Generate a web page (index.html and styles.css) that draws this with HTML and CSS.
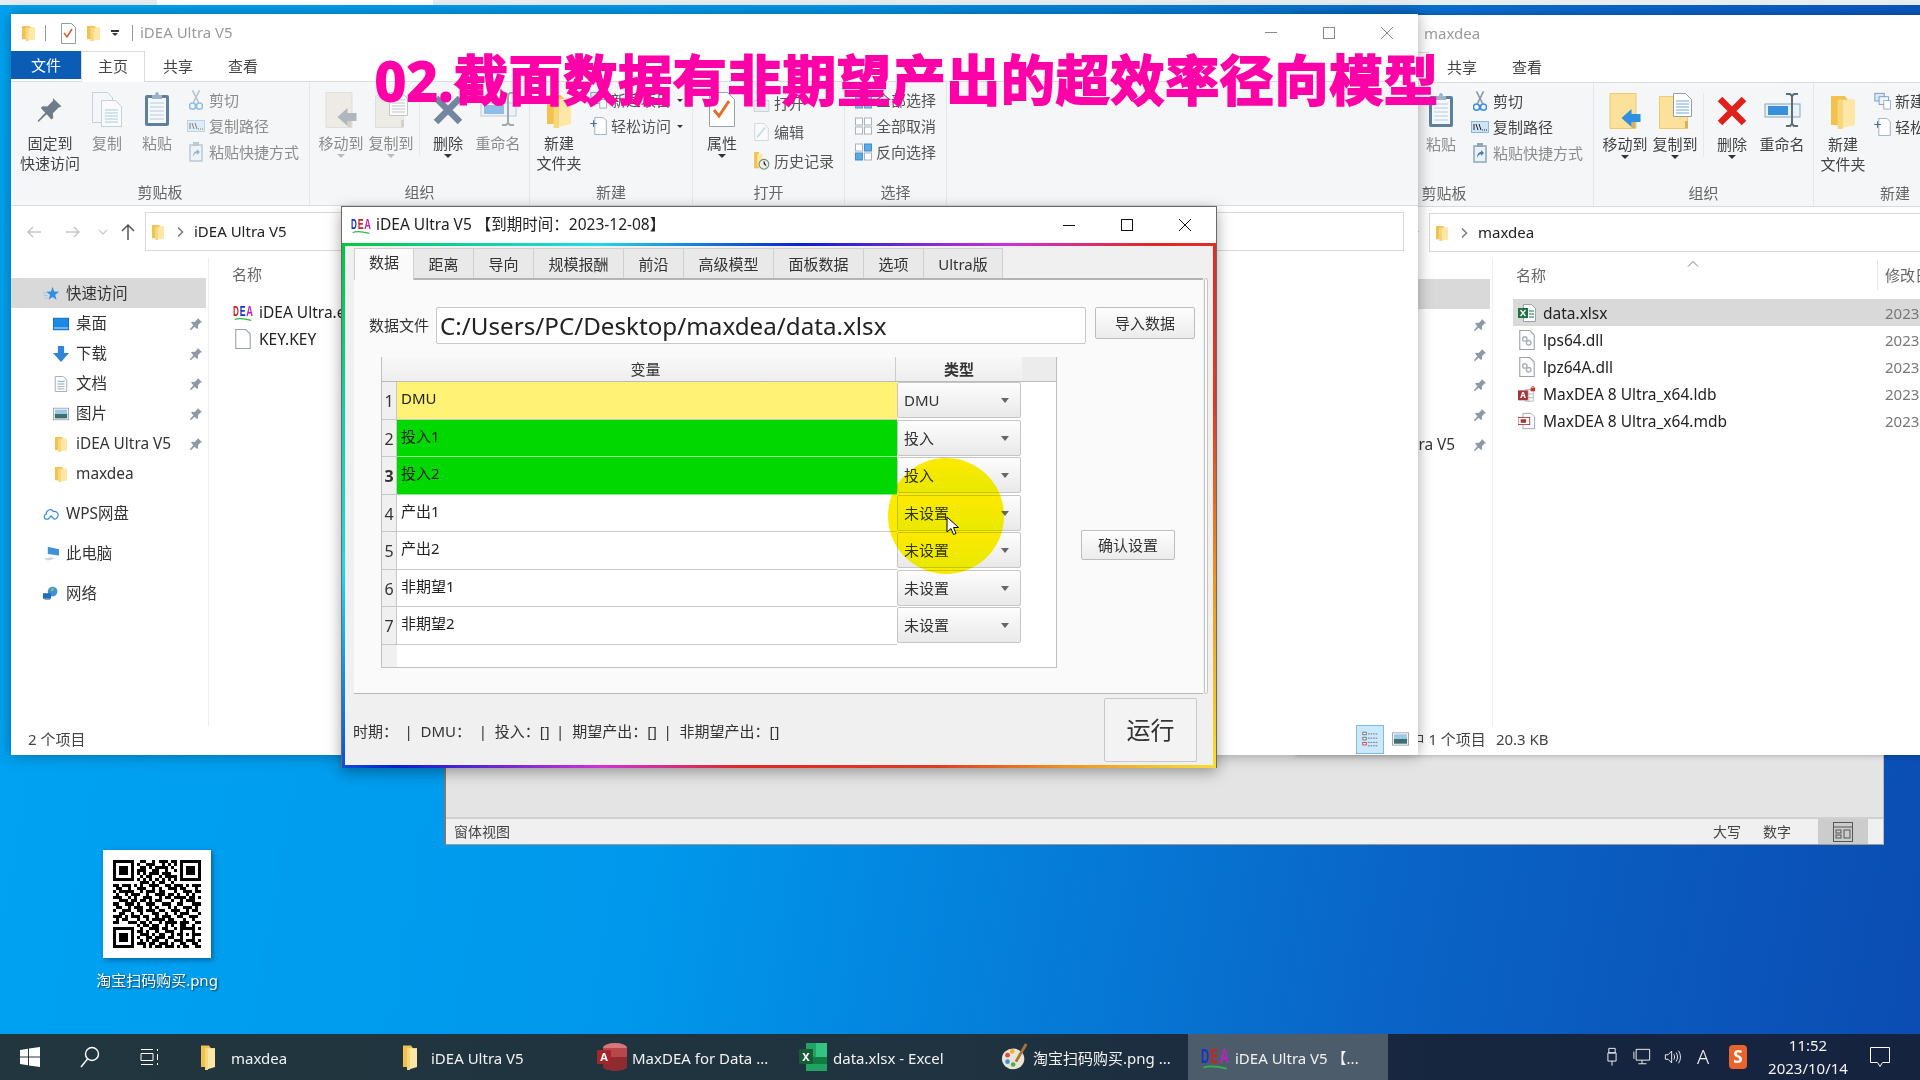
FILE: index.html
```html
<!DOCTYPE html>
<html lang="zh-CN">
<head>
<meta charset="utf-8">
<title>iDEA Ultra V5</title>
<link rel="stylesheet" href="styles.css">
</head>
<body>
<svg class="sprite" aria-hidden="true">
  <symbol id="i-folder" viewBox="0 0 14 18" preserveAspectRatio="none"><path fill="#f2c14e" d="M0 1h8l2 2h4v13H0z"/><path fill="#fce7a6" d="M4 3h10v13l-10 2z"/><path fill="#f7d67c" d="M4 3h3v15H4z"/></symbol>
  <symbol id="i-pin" viewBox="0 0 16 16"><path fill="#8d99a6" d="M10 1l5 5-1.8.4-3 3 .2 3.2-1.2 1L6.4 11 2 15l-1-1 4-4.5-2.6-2.8 1-1.2 3.2.2 3-3z"/></symbol>
  <symbol id="i-star" viewBox="0 0 20 18"><path fill="#2f8fe0" d="M12 0l2 6 6 .3-4.8 3.8 1.8 6-5-3.5L7 16l1.8-6L4 6.3l6-.3z"/><path stroke="#8fc4ee" d="M0 8h4M1 11h5M2 14h4"/></symbol>
  <symbol id="i-desk" viewBox="0 0 18 14"><rect x=".5" y=".5" width="17" height="13" fill="#1a8ae6" stroke="#0f64b4"/><path fill="#d9ecfb" d="M1 11h16v1H1z"/></symbol>
  <symbol id="i-down" viewBox="0 0 18 18"><path fill="#2f86d8" d="M5.500 0h7v8H18l-9 10-9-10h5.500z"/></symbol>
  <symbol id="i-doc" viewBox="0 0 14 18"><path fill="#fff" stroke="#9aa3ad" d="M.5.500h9l4 4v13H.5z"/><path stroke="#58a8c8" d="M3 6h8M3 9h8"/><path stroke="#9aa3ad" d="M3 12h8M3 14.500h8"/></symbol>
  <symbol id="i-pic" viewBox="0 0 18 14"><rect x=".5" y=".5" width="17" height="13" fill="#fff" stroke="#9aa3ad"/><rect x="2" y="2" width="14" height="5" fill="#9cc8e6"/><rect x="2" y="7" width="14" height="5" fill="#3f6f70"/></symbol>
  <symbol id="i-cloud" viewBox="0 0 20 16"><path fill="none" stroke="#3a8ce0" stroke-width="1.500" d="M5 14.500C1 14.500.2 9.500 3.800 8.500 4 3 10.500 .500 13 5c4-1 6.500 2.500 5.800 5-.6 2.500-2.300 4.500-4.800 4.500l-4-4-3.500 4z"/></symbol>
  <symbol id="i-pc" viewBox="0 0 20 18"><path fill="#3d92d8" d="M6 0l14 3v8L6 9z"/><path fill="#cfd5da" d="M1 15l9-2 5 2-9 2z"/></symbol>
  <symbol id="i-net" viewBox="0 0 20 18"><circle cx="12" cy="6" r="6" fill="#3d92d8"/><path fill="#86c06a" d="M9 3l4-2 1 3-3 2z"/><rect x="0" y="8" width="10" height="7" fill="#1f6fb8"/><path fill="#9fa8b0" d="M2 15h7v1.500H2z"/></symbol>
  <symbol id="i-blank" viewBox="0 0 14 18"><path fill="#fff" stroke="#9aa3ad" d="M.5.500h9l4 4v13H.5z"/></symbol>
  <symbol id="i-xlsx" viewBox="0 0 18 18"><path fill="#fff" stroke="#9aa3ad" d="M5.500.500h8l4 4v13h-12z"/><path stroke="#1e7145" d="M11 7h5M11 10h5M11 13h5"/><rect y="4" width="10" height="10" fill="#1e7145"/><path stroke="#fff" stroke-width="1.300" d="M2.500 6l5 6M7.500 6l-5 6"/></symbol>
  <symbol id="i-dll" viewBox="0 0 14 18"><path fill="#fff" stroke="#9aa3ad" d="M.5.500h9l4 4v13H.5z"/><circle cx="5" cy="8" r="2" fill="none" stroke="#a9b2ba" stroke-width="1.300"/><circle cx="8.500" cy="11.500" r="2" fill="none" stroke="#a9b2ba" stroke-width="1.300"/></symbol>
  <symbol id="i-mdb" viewBox="0 0 20 18"><path fill="#fff" stroke="#9aa3ad" d="M5.500.500h9l4 4v13h-13z"/><rect y="5" width="13" height="8" fill="#fff" stroke="#a4373a"/><rect x="3" y="7" width="6" height="4" fill="#a4373a"/></symbol>
  <symbol id="i-pinbig" viewBox="0 0 26 26"><path fill="#6e7b88" d="M16 1l9 9-3 .8-6 6 .4 5-2 1.700L9.500 18 1 26l-1-1 8-8.500-4.500-5 1.700-2 5 .4 6-6z"/></symbol>
  <symbol id="i-copy" viewBox="0 0 30 35"><path fill="#f4f7fb" stroke="#9fb3c8" d="M.5.500h15l5 5v25H.5z"/><path fill="#fff" stroke="#9fb3c8" d="M9.500 8.500h14l6 6v20h-20z"/><path stroke="#6ea8d8" d="M13 18h13M13 21h13M13 24h13M13 27h13M13 30h13"/></symbol>
  <symbol id="i-clip" viewBox="0 0 26 36"><rect x="1" y="4" width="24" height="31" rx="2" fill="#5f7f9f"/><rect x="4" y="7" width="18" height="25" fill="#f4f7fb"/><path stroke="#b7cbe0" d="M6 12h14M6 16h14M6 20h14M6 24h14M6 28h14"/><path fill="#9fb3c8" d="M8 4h3c0-4 4-4 4 0h3v4H8z"/></symbol>
  <symbol id="i-sciss" viewBox="0 0 16 24"><path stroke="#8a99a8" stroke-width="1.800" d="M4 1l7 14M12 1L5 15"/><circle cx="4" cy="19" r="3.500" fill="none" stroke="#3a8fdc" stroke-width="1.800"/><circle cx="12" cy="19" r="3.500" fill="none" stroke="#3a8fdc" stroke-width="1.800"/></symbol>
  <symbol id="i-path" viewBox="0 0 18 12"><rect x=".5" y=".5" width="17" height="11" fill="#cfe5f7" stroke="#8fb8d8"/><path stroke="#222" d="M3 3v6M5 3l2 6M8 3l2 6"/><path stroke="#222" stroke-dasharray="1 1" d="M11 9h5"/></symbol>
  <symbol id="i-short" viewBox="0 0 14 20"><path fill="#eaf2f9" stroke="#8fa5b8" stroke-width="1.500" d="M1 3h12v16H1z"/><rect x="4" y="0" width="6" height="4" fill="#8fa5b8"/><path fill="#4d7ea8" d="M4 15c0-4 2-6 4-6V7l3 3-3 3v-2c-1 0-3 1-4 4z"/></symbol>
  <symbol id="i-move" viewBox="0 0 32 36"><path fill="#fbe199" stroke="#eccb74" d="M.5.500h26v35H.5z"/><path fill="#d4b15e" d="M26 28h-4v7h4z"/><path fill="#2f8fe0" d="M13 27l10-9v5h9v8h-9v5z" transform="translate(-1 -2)"/></symbol>
  <symbol id="i-copyto" viewBox="0 0 33 36"><path fill="#fbe199" stroke="#eccb74" d="M.5 3.500h28v32H.5z"/><path fill="#d4b15e" d="M26 28h3v7h-3z"/><path fill="#fff" stroke="#8f9fb0" d="M14.500.500h12l6 6v17h-18z"/><path stroke="#6ea8d8" d="M17 8h13M17 11h13M17 14h13M17 17h13M17 20h13"/></symbol>
  <symbol id="i-x" viewBox="0 0 30 30"><path stroke="currentColor" stroke-width="6.500" d="M3 3l24 24M27 3L3 27"/></symbol>
  <symbol id="i-rename" viewBox="0 0 37 34"><rect x="1" y="11" width="35" height="13" fill="#e8f2fa" stroke="#8aa4ba"/><rect x="4" y="13" width="20" height="9" fill="#3a8fdc"/><path fill="none" stroke="#5f6b76" stroke-width="2" d="M22 1h4l2 2 2-2h4M28 3v28M22 33h4l2-2 2 2h4"/></symbol>
  <symbol id="i-newitem" viewBox="0 0 20 20"><rect x="1" y="1" width="11" height="9" fill="#d7e7f5" stroke="#6f96b8"/><rect x="6" y="5" width="11" height="9" fill="#eef5fb" stroke="#6f96b8"/><path fill="#fff" stroke="#8f9fb0" d="M11.500 9.500h8v10h-8z"/></symbol>
  <symbol id="i-easy" viewBox="0 0 20 22"><path fill="#fff" stroke="#8f9fb0" d="M5.500.500h10l4 4v17h-14z"/><path stroke="#3d6f9a" stroke-width="1.300" d="M0 8h8M4 4v8"/></symbol>
  <symbol id="i-prop" viewBox="0 0 26 36"><path fill="#fff" stroke="#9aa3ad" d="M.5 1.500h18l7 7v27H.5z"/><path fill="none" stroke="#e2702a" stroke-width="3" d="M5 19l5 6 10-15"/></symbol>
  <symbol id="i-qat" viewBox="0 0 15 22"><path fill="#fff" stroke="#8f9fb0" d="M.5 1.500h10l4 4v16H.5z"/><path fill="none" stroke="#d8582a" stroke-width="1.500" d="M3 11l3 4 5-8"/></symbol>
  <symbol id="i-open" viewBox="0 0 16 18"><path fill="#dbe8f3" stroke="#aab8c5" d="M.5 6.500h15v11H.5z"/><path fill="#9ab4cc" d="M8 0l5 6h-3v6H6V6H3z"/></symbol>
  <symbol id="i-edit" viewBox="0 0 16 20"><path fill="#fff" stroke="#aab8c5" d="M.5.500h10l5 5v14H.5z"/><path stroke="#a9c4dc" stroke-width="2" d="M3 16L12 5"/></symbol>
  <symbol id="i-hist" viewBox="0 0 18 22"><path fill="#f2c14e" d="M0 0h6v20H0z"/><path fill="#fce7a6" d="M4 2h6v16H4z"/><circle cx="12" cy="15" r="6" fill="#eee" stroke="#6d8a6d" stroke-width="1.300"/><path stroke="#3a6f3a" d="M12 11v4l3 2"/></symbol>
  <symbol id="i-selall" viewBox="0 0 17 17"><rect x=".5" y=".5" width="7" height="7" fill="#7db8e8" stroke="#5b9bd0"/><rect x="9.500" y=".5" width="7" height="7" fill="#7db8e8" stroke="#5b9bd0"/><rect x=".5" y="9.500" width="7" height="7" fill="#7db8e8" stroke="#5b9bd0"/><rect x="9.500" y="9.500" width="7" height="7" fill="#7db8e8" stroke="#5b9bd0"/></symbol>
  <symbol id="i-selnone" viewBox="0 0 17 17"><g fill="#fff" stroke="#a9b2ba"><rect x=".5" y=".5" width="7" height="7"/><rect x="9.500" y=".5" width="7" height="7"/><rect x=".5" y="9.500" width="7" height="7"/><rect x="9.500" y="9.500" width="7" height="7"/></g></symbol>
  <symbol id="i-selinv" viewBox="0 0 17 17"><rect x=".5" y=".5" width="7" height="7" fill="#fff" stroke="#a9b2ba"/><rect x="9.500" y=".5" width="7" height="7" fill="#5daae8" stroke="#3d8fd0"/><rect x=".5" y="9.500" width="7" height="7" fill="#5daae8" stroke="#3d8fd0"/><rect x="9.500" y="9.500" width="7" height="7" fill="#fff" stroke="#a9b2ba"/></symbol>
  <symbol id="i-back" viewBox="0 0 16 12"><path fill="none" stroke="currentColor" stroke-width="1.500" d="M15 6H2M7 1L2 6l5 5"/></symbol>
  <symbol id="i-fwd" viewBox="0 0 16 12"><path fill="none" stroke="currentColor" stroke-width="1.500" d="M1 6h13M9 1l5 5-5 5"/></symbol>
  <symbol id="i-vdown" viewBox="0 0 16 12"><path fill="none" stroke="currentColor" stroke-width="1.200" d="M4 4l4 4 4-4"/></symbol>
  <symbol id="i-up" viewBox="0 0 16 18"><path fill="none" stroke="currentColor" stroke-width="1.500" d="M8 17V2M2 8l6-6 6 6"/></symbol>
  <symbol id="i-chev" viewBox="0 0 10 12"><path fill="none" stroke="#7a7a7a" stroke-width="1.500" d="M3 1.500L7.500 6 3 10.500"/></symbol>
  <symbol id="i-list" viewBox="0 0 20 20"><path stroke="#666" d="M7 4h11M7 9h11M7 14h11M7 18h11" stroke-dasharray="2 1"/><rect x="1" y="2" width="4" height="3" fill="#fff" stroke="#666"/><rect x="1" y="8" width="4" height="3" fill="#fff" stroke="#666"/><rect x="1" y="14" width="4" height="3" fill="#fff" stroke="#c0392b"/></symbol>
  <symbol id="i-win" viewBox="0 0 20 20"><path fill="#fff" d="M0 3l8-1.200V9.500H0zM9 1.600L20 0v9.500H9zM0 10.500h8v7.700L0 17zM9 10.500h11V20L9 18.400z"/></symbol>
  <symbol id="i-search" viewBox="0 0 20 22"><circle cx="12" cy="8" r="6.500" fill="none" stroke="#fff" stroke-width="1.400"/><path stroke="#fff" stroke-width="1.400" d="M7.500 13L1 21"/></symbol>
  <symbol id="i-task" viewBox="0 0 20 20"><path fill="none" stroke="#fff" d="M1 6.500h12v7H1zM1 2.500h12M1 17.500h12M17.500 2v2M17.500 7v6M17.500 16v2"/></symbol>
  <symbol id="i-paint" viewBox="0 0 30 30"><ellipse cx="13" cy="17" rx="12" ry="11" fill="#e9e4d5"/><circle cx="7" cy="13" r="2.500" fill="#d94a3d"/><circle cx="12" cy="9" r="2.500" fill="#f2b134"/><circle cx="7" cy="20" r="2.500" fill="#3d8fd9"/><circle cx="13" cy="23" r="2.500" fill="#4caf50"/><path stroke="#a9743a" stroke-width="3" d="M27 1L16 20"/></symbol>
  <symbol id="i-usb" viewBox="0 0 14 22"><path fill="none" stroke="#fff" d="M3.500 1.500h7v5h-7zM2.500 6.500h9v9h-9zM7 15.500v5"/></symbol>
  <symbol id="i-mon" viewBox="0 0 20 20"><path fill="none" stroke="#fff" d="M3.500 1.500h15v12h-15zM10 13.500v4M6 17.500h9M1 4v8"/></symbol>
  <symbol id="i-snd" viewBox="0 0 20 18"><path fill="none" stroke="#fff" d="M1.500 6.500h3l4-4v13l-4-4h-3zM11 6c1 2 1 4 0 6M13.500 4c2 3 2 7 0 10M16 2c3 4 3 10 0 14"/></symbol>
  <symbol id="i-note" viewBox="0 0 20 22"><path fill="none" stroke="#fff" d="M.5 1.500h19v15h-7l-2.500 4-2.500-4h-7z"/></symbol>
  <symbol id="i-view" viewBox="0 0 20 20"><rect x=".5" y=".5" width="19" height="19" fill="none" stroke="#555"/><path stroke="#555" d="M1 5h18"/><rect x="3" y="8" width="5" height="3" fill="none" stroke="#555"/><rect x="3" y="13" width="5" height="3" fill="none" stroke="#555"/><rect x="11" y="8" width="6" height="8" fill="none" stroke="#555"/></symbol>
</svg>

<div class="desktop">
  <div class="bg-strip"><span class="bg-strip-w"></span></div>

  <div class="access">
    <div class="access-body"></div>
    <div class="access-status">
      <span class="as-text">窗体视图</span>
      <span class="as-key">大写</span>
      <span class="as-key">数字</span>
      <span class="as-view"><svg class="ic20"><use href="#i-view"/></svg></span>
    </div>
  </div>

  <div class="qr-item">
    <div class="qr-card">
      <svg class="qr" viewBox="0 0 29 29" shape-rendering="crispEdges">
        <path fill="none" stroke="#000" d="M0 .5h7M22 .5h7M0 6.500h7M22 6.500h7M0 22.500h7M0 28.500h7M.5 0v7M6.500 0v7M22.500 0v7M28.500 0v7M.5 22v7M6.500 22v7"/>
        <path fill="#000" d="M2 2h3v3H2zM24 2h3v3h-3zM2 24h3v3H2z"/>
        <path fill="none" stroke="#000" d="M9 .5h2M13 .5h1M15 .5h3M19 .5h2M8 1.500h1M11 1.500h3M16 1.500h1M18 1.500h1M20 1.500h1M9 2.500h2M12 2.500h1M14 2.500h4M19 2.500h1M8 3.500h3M13 3.500h2M17 3.500h1M20 3.500h1M8 4.500h1M10 4.500h1M12 4.500h3M16 4.500h3M9 5.500h1M11 5.500h2M15 5.500h1M17 5.500h4M8 6.500h1M10 6.500h1M12 6.500h1M14 6.500h1M16 6.500h1M18 6.500h1M20 6.500h1M9 7.500h3M13 7.500h1M15 7.500h2M19 7.500h1M0 8.500h2M3 8.500h3M7 8.500h1M9 8.500h1M12 8.500h3M17 8.500h2M20 8.500h3M24 8.500h1M26 8.500h3M1 9.500h2M5 9.500h1M8 9.500h3M13 9.500h1M15 9.500h1M18 9.500h3M22 9.500h2M27 9.500h1M0 10.500h1M2 10.500h4M6 10.500h1M9 10.500h1M11 10.500h3M15 10.500h2M20 10.500h1M23 10.500h3M27 10.500h2M1 11.500h1M4 11.500h1M6 11.500h3M11 11.500h1M14 11.500h3M18 11.500h2M21 11.500h1M24 11.500h1M26 11.500h1M0 12.500h3M5 12.500h1M7 12.500h1M10 12.500h3M15 12.500h1M17 12.500h2M20 12.500h4M25 12.500h2M28 12.500h1M2 13.500h3M6 13.500h2M9 13.500h2M12 13.500h1M14 13.500h2M19 13.500h1M22 13.500h1M24 13.500h3M0 14.500h2M4 14.500h3M8 14.500h1M11 14.500h3M16 14.500h3M21 14.500h2M26 14.500h3M1 15.500h2M5 15.500h1M7 15.500h3M12 15.500h1M14 15.500h1M18 15.500h1M20 15.500h1M23 15.500h3M27 15.500h1M0 16.500h1M3 16.500h3M8 16.500h2M11 16.500h3M15 16.500h2M19 16.500h3M24 16.500h1M26 16.500h2M2 17.500h2M6 17.500h1M9 17.500h1M13 17.500h2M17 17.500h1M20 17.500h1M22 17.500h3M28 17.500h1M0 18.500h3M4 18.500h1M6 18.500h3M10 18.500h2M14 18.500h1M16 18.500h3M21 18.500h2M25 18.500h3M1 19.500h1M3 19.500h2M8 19.500h1M11 19.500h1M13 19.500h4M18 19.500h2M23 19.500h1M26 19.500h1M0 20.500h2M5 20.500h3M9 20.500h2M12 20.500h1M15 20.500h1M17 20.500h4M22 20.500h3M27 20.500h2M8 21.500h1M10 21.500h2M13 21.500h2M17 21.500h1M19 21.500h1M22 21.500h2M26 21.500h1M9 22.500h1M12 22.500h3M16 22.500h2M20 22.500h1M22 22.500h5M28 22.500h1M8 23.500h2M11 23.500h1M14 23.500h1M17 23.500h3M22 23.500h1M26 23.500h1M9 24.500h3M13 24.500h1M15 24.500h2M19 24.500h1M21 24.500h2M24 24.500h1M26 24.500h3M8 25.500h1M11 25.500h2M14 25.500h3M18 25.500h2M22 25.500h1M26 25.500h1M9 26.500h1M11 26.500h1M13 26.500h2M17 26.500h1M20 26.500h3M24 26.500h3M28 26.500h1M8 27.500h3M12 27.500h2M15 27.500h3M19 27.500h1M22 27.500h2M26 27.500h2M10 28.500h1M12 28.500h1M14 28.500h2M17 28.500h3M21 28.500h1M23 28.500h2M27 28.500h2"/>
      </svg>
    </div>
    <div class="qr-label">淘宝扫码购买.png</div>
  </div>

  <!-- 右侧资源管理器窗口 -->
  <section class="ex ex-right">
    <div class="ex-title">
      <span class="ex-name ex-name-right">maxdea</span>
    </div>
    <div class="ex-tabs">
      <span class="tab tab-file">文件</span><span class="tab tab-home">主页</span><span class="tab tab-share">共享</span><span class="tab tab-view">查看</span>
    </div>
    <div class="ribbon">
      <div class="group g1">
        <div class="g-body">
          <div class="big b-pin"><svg class="ic-pin"><use href="#i-pinbig"/></svg><span>固定到<br>快速访问</span></div>
          <div class="big"><svg class="ic-copy"><use href="#i-copy"/></svg><span>复制</span></div>
          <div class="big dim"><svg class="ic-clip"><use href="#i-clip"/></svg><span>粘贴</span></div>
          <div class="small-col">
            <div class="small"><span class="sm-ic"><svg class="ic-sciss"><use href="#i-sciss"/></svg></span>剪切</div>
            <div class="small"><span class="sm-ic"><svg class="ic-path"><use href="#i-path"/></svg></span>复制路径</div>
            <div class="small dim"><span class="sm-ic"><svg class="ic-short"><use href="#i-short"/></svg></span>粘贴快捷方式</div>
          </div>
        </div>
        <div class="g-label">剪贴板</div>
      </div>
      <div class="group g2">
        <div class="g-body">
          <div class="big"><svg class="ic-move"><use href="#i-move"/></svg><span>移动到</span><i class="caret"></i></div>
          <div class="big"><svg class="ic-move"><use href="#i-copyto"/></svg><span>复制到</span><i class="caret"></i></div>
          <div class="divider"></div>
          <div class="big"><svg class="ic-x red"><use href="#i-x"/></svg><span>删除</span><i class="caret"></i></div>
          <div class="big"><svg class="ic-rename"><use href="#i-rename"/></svg><span>重命名</span></div>
        </div>
        <div class="g-label">组织</div>
      </div>
      <div class="group g3">
        <div class="g-body">
          <div class="big b-new"><svg class="ic-bigfolder"><use href="#i-folder"/></svg><span>新建<br>文件夹</span></div>
          <div class="small-col sc3">
            <div class="small"><span class="sm-ic"><svg class="ic-16"><use href="#i-newitem"/></svg></span>新建项目</div>
            <div class="small"><span class="sm-ic"><svg class="ic-16"><use href="#i-easy"/></svg></span>轻松访问</div>
          </div>
        </div>
        <div class="g-label">新建</div>
      </div>
    </div>
    <div class="addr-row">
      <svg class="nav-a na1"><use href="#i-back"/></svg><svg class="nav-a na2"><use href="#i-fwd"/></svg><svg class="nav-a na3"><use href="#i-vdown"/></svg><svg class="nav-a na4"><use href="#i-up"/></svg>
      <div class="addr"><svg class="ic-folder"><use href="#i-folder"/></svg><svg class="ic-chev"><use href="#i-chev"/></svg><span class="addr-t">maxdea</span></div>
    </div>
    <div class="ex-main">
      <nav class="nav">
        <div class="nav-row sel top"><svg class="ic-nav"><use href="#i-star"/></svg><span>快速访问</span></div>
        <div class="nav-row sub"><svg class="ic-nav"><use href="#i-desk"/></svg><span>桌面</span><svg class="ic-pinS"><use href="#i-pin"/></svg></div>
        <div class="nav-row sub"><svg class="ic-nav"><use href="#i-down"/></svg><span>下载</span><svg class="ic-pinS"><use href="#i-pin"/></svg></div>
        <div class="nav-row sub"><svg class="ic-nav"><use href="#i-doc"/></svg><span>文档</span><svg class="ic-pinS"><use href="#i-pin"/></svg></div>
        <div class="nav-row sub"><svg class="ic-nav"><use href="#i-pic"/></svg><span>图片</span><svg class="ic-pinS"><use href="#i-pin"/></svg></div>
        <div class="nav-row sub"><svg class="ic-nav"><use href="#i-folder"/></svg><span>iDEA Ultra V5</span><svg class="ic-pinS"><use href="#i-pin"/></svg></div>
      </nav>
      <div class="files">
        <div class="f-head"><span class="f-name">名称</span><svg class="f-caret" viewBox="0 0 12 6"><path fill="none" stroke="#777" d="M1 5.500l5-5 5 5"/></svg><span class="f-sep"></span><span class="f-date">修改日期</span></div>
        <div class="f-row sel"><svg class="ic-file"><use href="#i-xlsx"/></svg><span class="f-n">data.xlsx</span><span class="f-d">2023</span></div>
        <div class="f-row"><svg class="ic-file"><use href="#i-dll"/></svg><span class="f-n">lps64.dll</span><span class="f-d">2023</span></div>
        <div class="f-row"><svg class="ic-file"><use href="#i-dll"/></svg><span class="f-n">lpz64A.dll</span><span class="f-d">2023</span></div>
        <div class="f-row"><svg class="ic-file" viewBox="0 0 20 18"><path fill="#fff" stroke="#b5b5b5" d="M8 4h9v13H8z"/><path stroke="#b5b5b5" d="M12 4v13M8 9h9M8 13h9"/><rect y="5" width="11" height="11" fill="#a4373a"/><text x="5.500" y="14" class="mini-t">A</text><rect x="14" y="2" width="5" height="4" fill="#c0392b"/><path fill="none" stroke="#c0392b" d="M15 2c0-2 3-2 3 0"/></svg><span class="f-n">MaxDEA 8 Ultra_x64.ldb</span><span class="f-d">2023</span></div>
        <div class="f-row"><svg class="ic-file"><use href="#i-mdb"/></svg><span class="f-n">MaxDEA 8 Ultra_x64.mdb</span><span class="f-d">2023</span></div>
      </div>
    </div>
    <div class="ex-status"><span>5 个项目</span><span class="st-sel">选中 1 个项目</span><span class="st-size">20.3 KB</span></div>
  </section>

  <!-- 左侧资源管理器窗口 -->
  <section class="ex ex-left">
    <div class="ex-title">
      <svg class="q-folder"><use href="#i-folder"/></svg><i class="q-sep qs1"></i><svg class="q-doc"><use href="#i-qat"/></svg><svg class="q-folder q2"><use href="#i-folder"/></svg><i class="q-caret"></i><i class="q-sep qs2"></i>
      <span class="ex-name">iDEA Ultra V5</span>
      <div class="ctrls">
        <span class="ctrl"><i class="c-min"></i></span><span class="ctrl"><i class="c-max"></i></span><span class="ctrl"><svg class="c-x" viewBox="0 0 14 14"><path stroke="currentColor" d="M1 1l12 12M13 1L1 13"/></svg></span>
      </div>
    </div>
    <div class="ex-tabs">
      <span class="tab tab-file">文件</span><span class="tab tab-home">主页</span><span class="tab tab-share">共享</span><span class="tab tab-view">查看</span>
    </div>
    <div class="ribbon">
      <div class="group g1">
        <div class="g-body">
          <div class="big b-pin"><svg class="ic-pin"><use href="#i-pinbig"/></svg><span>固定到<br>快速访问</span></div>
          <div class="big dim"><svg class="ic-copy fade"><use href="#i-copy"/></svg><span>复制</span></div>
          <div class="big dim"><svg class="ic-clip"><use href="#i-clip"/></svg><span>粘贴</span></div>
          <div class="small-col dim">
            <div class="small"><span class="sm-ic"><svg class="ic-sciss fade"><use href="#i-sciss"/></svg></span>剪切</div>
            <div class="small"><span class="sm-ic"><svg class="ic-path fade"><use href="#i-path"/></svg></span>复制路径</div>
            <div class="small"><span class="sm-ic"><svg class="ic-short fade"><use href="#i-short"/></svg></span>粘贴快捷方式</div>
          </div>
        </div>
        <div class="g-label">剪贴板</div>
      </div>
      <div class="group g2">
        <div class="g-body">
          <div class="big dim"><svg class="ic-move mute"><use href="#i-move"/></svg><span>移动到</span><i class="caret soft"></i></div>
          <div class="big dim"><svg class="ic-move mute"><use href="#i-copyto"/></svg><span>复制到</span><i class="caret soft"></i></div>
          <div class="divider"></div>
          <div class="big"><svg class="ic-x slate"><use href="#i-x"/></svg><span>删除</span><i class="caret"></i></div>
          <div class="big dim"><svg class="ic-rename fade"><use href="#i-rename"/></svg><span>重命名</span></div>
        </div>
        <div class="g-label">组织</div>
      </div>
      <div class="group g3">
        <div class="g-body">
          <div class="big b-new"><svg class="ic-bigfolder"><use href="#i-folder"/></svg><span>新建<br>文件夹</span></div>
          <div class="small-col sc3">
            <div class="small"><span class="sm-ic"><svg class="ic-16"><use href="#i-newitem"/></svg></span>新建项目<i class="caret inline"></i></div>
            <div class="small"><span class="sm-ic"><svg class="ic-16"><use href="#i-easy"/></svg></span>轻松访问<i class="caret inline"></i></div>
          </div>
        </div>
        <div class="g-label">新建</div>
      </div>
      <div class="group g4">
        <div class="g-body">
          <div class="big"><svg class="ic-prop"><use href="#i-prop"/></svg><span>属性</span><i class="caret"></i></div>
          <div class="small-col tall">
            <div class="small dim"><span class="sm-ic"><svg class="ic-16 fade"><use href="#i-open"/></svg></span>打开</div>
            <div class="small dim"><span class="sm-ic"><svg class="ic-16 fade"><use href="#i-edit"/></svg></span>编辑</div>
            <div class="small"><span class="sm-ic"><svg class="ic-16"><use href="#i-hist"/></svg></span>历史记录</div>
          </div>
        </div>
        <div class="g-label">打开</div>
      </div>
      <div class="group g5">
        <div class="g-body">
          <div class="small-col">
            <div class="small"><span class="sm-ic"><svg class="ic-16"><use href="#i-selall"/></svg></span>全部选择</div>
            <div class="small"><span class="sm-ic"><svg class="ic-16"><use href="#i-selnone"/></svg></span>全部取消</div>
            <div class="small"><span class="sm-ic"><svg class="ic-16"><use href="#i-selinv"/></svg></span>反向选择</div>
          </div>
        </div>
        <div class="g-label">选择</div>
      </div>
    </div>
    <div class="addr-row">
      <svg class="nav-a na1"><use href="#i-back"/></svg><svg class="nav-a na2"><use href="#i-fwd"/></svg><svg class="nav-a na3"><use href="#i-vdown"/></svg><svg class="nav-a na4"><use href="#i-up"/></svg>
      <div class="addr"><svg class="ic-folder"><use href="#i-folder"/></svg><svg class="ic-chev"><use href="#i-chev"/></svg><span class="addr-t">iDEA Ultra V5</span></div>
    </div>
    <div class="ex-main">
      <nav class="nav">
        <div class="nav-row sel top"><svg class="ic-nav"><use href="#i-star"/></svg><span>快速访问</span></div>
        <div class="nav-row sub"><svg class="ic-nav"><use href="#i-desk"/></svg><span>桌面</span><svg class="ic-pinS"><use href="#i-pin"/></svg></div>
        <div class="nav-row sub"><svg class="ic-nav"><use href="#i-down"/></svg><span>下载</span><svg class="ic-pinS"><use href="#i-pin"/></svg></div>
        <div class="nav-row sub"><svg class="ic-nav"><use href="#i-doc"/></svg><span>文档</span><svg class="ic-pinS"><use href="#i-pin"/></svg></div>
        <div class="nav-row sub"><svg class="ic-nav"><use href="#i-pic"/></svg><span>图片</span><svg class="ic-pinS"><use href="#i-pin"/></svg></div>
        <div class="nav-row sub"><svg class="ic-nav ic-nf"><use href="#i-folder"/></svg><span>iDEA Ultra V5</span><svg class="ic-pinS"><use href="#i-pin"/></svg></div>
        <div class="nav-row sub"><svg class="ic-nav ic-nf"><use href="#i-folder"/></svg><span>maxdea</span></div>
        <div class="nav-row top gap"><svg class="ic-nav"><use href="#i-cloud"/></svg><span>WPS网盘</span></div>
        <div class="nav-row top gap"><svg class="ic-nav"><use href="#i-pc"/></svg><span>此电脑</span></div>
        <div class="nav-row top gap"><svg class="ic-nav"><use href="#i-net"/></svg><span>网络</span></div>
      </nav>
      <div class="files">
        <div class="f-head"><span class="f-name">名称</span></div>
        <div class="f-row"><svg class="ic-file dea-file" viewBox="0 0 24 24"><text x="0" y="17" textLength="7" lengthAdjust="spacingAndGlyphs" class="dea-t" fill="#d02020">D</text><text x="8" y="17" textLength="7" lengthAdjust="spacingAndGlyphs" class="dea-t" fill="#1432c8">E</text><text x="16" y="17" textLength="8" lengthAdjust="spacingAndGlyphs" class="dea-t" fill="#c020c0">A</text><path fill="none" stroke="#2fb84a" stroke-width="1.500" d="M2 21c6-2 12-1 20 1"/></svg><span class="f-n">iDEA Ultra.exe</span></div>
        <div class="f-row"><svg class="ic-file"><use href="#i-blank"/></svg><span class="f-n">KEY.KEY</span></div>
      </div>
    </div>
    <div class="ex-status">
      <span>2 个项目</span>
      <div class="st-views">
        <span class="st-v on"><svg class="ic-16"><use href="#i-list"/></svg></span>
        <span class="st-v"><svg class="ic-16"><use href="#i-pic"/></svg></span>
      </div>
    </div>
  </section>

  <!-- 前台软件窗口 -->
  <section class="app">
    <header class="app-title">
      <svg class="app-logo" viewBox="0 0 24 24"><text x="0" y="17" textLength="7" lengthAdjust="spacingAndGlyphs" class="dea-t" fill="#1432c8">D</text><text x="8" y="17" textLength="7" lengthAdjust="spacingAndGlyphs" class="dea-t" fill="#d02020">E</text><text x="16" y="17" textLength="8" lengthAdjust="spacingAndGlyphs" class="dea-t" fill="#c020c0">A</text><path fill="none" stroke="#2fb84a" stroke-width="1.500" d="M2 21c6-2 12-1 20 1"/></svg>
      <span class="app-name">iDEA Ultra V5 【到期时间：2023-12-08】</span>
      <div class="ctrls dark">
        <span class="ctrl"><i class="c-min"></i></span><span class="ctrl"><i class="c-max"></i></span><span class="ctrl"><svg class="c-x" viewBox="0 0 14 14"><path stroke="currentColor" d="M1 1l12 12M13 1L1 13"/></svg></span>
      </div>
    </header>
    <div class="frame">
      <div class="inner">
        <div class="a-tabs">
          <span class="a-tab on w60">数据</span><span class="a-tab w60">距离</span><span class="a-tab w60">导向</span><span class="a-tab w90">规模报酬</span><span class="a-tab w60">前沿</span><span class="a-tab w90">高级模型</span><span class="a-tab w90">面板数据</span><span class="a-tab w60">选项</span><span class="a-tab w79">Ultra版</span>
        </div>
        <div class="pane-wrap">
          <div class="pane">
            <div class="file-row">
              <label class="file-label">数据文件</label>
              <div class="file-input">C:/Users/PC/Desktop/maxdea/data.xlsx</div>
              <button class="btn btn-import">导入数据</button>
            </div>
            <div class="table-row">
              <div class="grid">
                <div class="g-head"><span class="gh-corner"></span><span class="gh-var">变量</span><span class="gh-type">类型</span><span class="gh-fill"></span></div>
                <div class="g-line"><span class="rh">1</span><span class="cell yellow">DMU</span><div class="combo">DMU<i class="combo-a"></i></div></div>
                <div class="g-line"><span class="rh">2</span><span class="cell green">投入1</span><div class="combo">投入<i class="combo-a"></i></div></div>
                <div class="g-line"><span class="rh bold">3</span><span class="cell green">投入2</span><div class="combo">投入<i class="combo-a"></i></div></div>
                <div class="g-line"><span class="rh">4</span><span class="cell">产出1</span><div class="combo">未设置<i class="combo-a"></i></div></div>
                <div class="g-line"><span class="rh">5</span><span class="cell">产出2</span><div class="combo">未设置<i class="combo-a"></i></div></div>
                <div class="g-line"><span class="rh">6</span><span class="cell">非期望1</span><div class="combo">未设置<i class="combo-a"></i></div></div>
                <div class="g-line"><span class="rh">7</span><span class="cell">非期望2</span><div class="combo">未设置<i class="combo-a"></i></div></div>
                <div class="g-rest"><span class="rh-rest"></span></div>
              </div>
              <button class="btn btn-confirm">确认设置</button>
            </div>
          </div>
          <div class="vbar"></div>
        </div>
        <div class="a-foot">
          <span class="foot-t">时期： &thinsp;|  DMU：  |  投入：[] &thinsp;|  期望产出：[] &thinsp;|  非期望产出：[]</span>
          <button class="btn btn-run">运行</button>
        </div>
      </div>
    </div>
  </section>

  <div class="spot"></div>
  <svg class="cursor" viewBox="0 0 13 20"><path fill="#fff" stroke="#000" d="M1 1v15l4-3.500 2.500 6 2.500-1-2.500-6H12.500z"/></svg>

  <h1 class="headline">02.截面数据有非期望产出的超效率径向模型</h1>

  <footer class="taskbar">
    <span class="tb-btn"><svg class="ic20"><use href="#i-win"/></svg></span>
    <span class="tb-btn"><svg class="ic-tsearch"><use href="#i-search"/></svg></span>
    <span class="tb-btn"><svg class="ic20"><use href="#i-task"/></svg></span>
    <div class="ti t1"><svg class="ic-tf"><use href="#i-folder"/></svg><span>maxdea</span></div>
    <div class="ti t2"><svg class="ic-tf"><use href="#i-folder"/></svg><span>iDEA Ultra V5</span></div>
    <div class="ti t3"><svg class="ic-app" viewBox="0 0 30 28"><ellipse cx="18" cy="5" rx="12" ry="5" fill="#d9767a"/><path fill="#b8474b" d="M6 5h24v18c0 6-24 6-24 0z"/><path fill="#8f2a2e" d="M6 14h24v9c0 6-24 6-24 0z"/><rect y="7" width="14" height="14" rx="1" fill="#a4262c"/><text x="7" y="18" class="app-t">A</text></svg><span>MaxDEA for Data ...</span></div>
    <div class="ti t4"><svg class="ic-app x28" viewBox="0 0 28 28"><rect x="7" width="21" height="28" fill="#21a366"/><rect x="7" y="14" width="21" height="7" fill="#107c41"/><rect x="17" width="11" height="14" fill="#33c481"/><rect y="6" width="14" height="15" rx="1" fill="#185c37"/><text x="7" y="18" class="app-t">X</text></svg><span>data.xlsx - Excel</span></div>
    <div class="ti t5"><svg class="ic-app"><use href="#i-paint"/></svg><span>淘宝扫码购买.png ...</span></div>
    <div class="ti t6"><svg class="ic-app" viewBox="0 0 24 24"><text x="0" y="17" textLength="7" lengthAdjust="spacingAndGlyphs" class="dea-t" fill="#1432c8">D</text><text x="8" y="17" textLength="7" lengthAdjust="spacingAndGlyphs" class="dea-t" fill="#d02020">E</text><text x="16" y="17" textLength="8" lengthAdjust="spacingAndGlyphs" class="dea-t" fill="#c020c0">A</text><path fill="none" stroke="#2fb84a" stroke-width="1.500" d="M2 21c6-2 12-1 20 1"/></svg><span>iDEA Ultra V5 【...</span></div>
    <div class="tray">
      <span class="tr w30"><svg class="ic-tr"><use href="#i-usb"/></svg></span>
      <span class="tr w30"><svg class="ic-tr"><use href="#i-mon"/></svg></span>
      <span class="tr w31"><svg class="ic-tr"><use href="#i-snd"/></svg></span>
      <span class="tr w30 tr-a">A</span>
      <span class="tr w40"><span class="sogou">S</span></span>
      <div class="clock"><span>11:52</span><span>2023/10/14</span></div>
      <span class="tr w44"><svg class="ic-note"><use href="#i-note"/></svg></span>
    </div>
  </footer>
</div>
</body>
</html>
```
FILE: styles.css
```css
* { box-sizing: border-box; }
html, body { margin: 0; padding: 0; }
body { width: 1920px; height: 1080px; overflow: hidden; font: 15px/20px "Noto Sans", "Noto Sans CJK SC", sans-serif; color: #333; }
svg { display: block; flex: none; }
i { display: block; font-style: normal; }
.sprite { position: absolute; width: 0; height: 0; overflow: hidden; }
.mini-t { font: bold 9px "Noto Sans", sans-serif; fill: #fff; text-anchor: middle; }
.dea-t { font: bold 17px "Liberation Sans", sans-serif; }
.app-t { font: bold 11px "Noto Sans", sans-serif; fill: #fff; text-anchor: middle; }

.desktop { position: relative; width: 1920px; height: 1080px; overflow: hidden; display: flex; flex-direction: column; justify-content: flex-end; background: linear-gradient(100deg, #00a4f2 0%, #0098ec 38%, #0a63c6 75%, #0b4cb2 100%); }
.bg-strip { position: absolute; left: 0; top: 0; width: 100%; height: 5px; background: #e8edf1; }
.bg-strip-w { display: block; margin-left: 157px; width: 276px; height: 5px; background: #fff; }

/* access window */
.access { position: absolute; left: 444px; top: 700px; width: 1440px; height: 145px; z-index: 0; display: flex; flex-direction: column; border-left: 2px solid #7a7a7a; border-right: 1px solid #bbb; border-bottom: 1px solid #999; background: #e4e4e4; }
.access-body { flex: 1; }
.access-status { height: 27px; display: flex; align-items: center; background: #f0f0f0; border-top: 2px solid #d0d0d0; font-size: 14px; color: #444; }
.as-text { padding-left: 8px; margin-right: auto; }
.as-key { width: 50px; }
.as-view { width: 50px; height: 25px; margin-left: 5px; margin-right: 15px; background: #ccc; display: flex; align-items: center; justify-content: center; }
.ic20 { width: 20px; height: 20px; }

/* qr */
.qr-item { position: absolute; left: 87px; top: 850px; width: 140px; display: flex; flex-direction: column; align-items: center; }
.qr-card { width: 108px; height: 108px; background: #fff; padding: 10px; box-shadow: 2px 2px 5px rgba(0, 40, 90, .5); }
.qr { width: 88px; height: 88px; }
.qr-label { margin-top: 12px; color: #fff; white-space: nowrap; line-height: 20px; text-shadow: 1px 1px 2px rgba(0, 0, 0, .7); }

/* explorer */
.ex { position: absolute; display: flex; flex-direction: column; width: 1407px; background: #fff; }
.ex-left { left: 11px; top: 14px; height: 741px; z-index: 2; box-shadow: 0 0 14px rgba(0, 0, 0, .35); }
.ex-right { left: 1295px; top: 15px; height: 740px; z-index: 1; box-shadow: 0 0 6px rgba(0, 0, 0, .3); }
.ex-title { height: 37px; flex: none; display: flex; align-items: center; padding-left: 11px; }
.q-folder { width: 13px; height: 16px; }
.q-sep { width: 1px; height: 16px; background: #999; }
.qs1 { margin-left: 10px; }
.q-doc { width: 15px; height: 22px; margin-left: 15px; }
.q2 { margin-left: 11px; }
.q-caret { width: 8px; height: 6px; margin-left: 11px; border-top: 2px solid #333; }
.q-caret::after { content: ""; display: block; margin: 1px auto 0; width: 0; height: 0; border: 3px solid transparent; border-top-color: #333; border-bottom: 0; }
.qs2 { margin-left: 13px; }
.ex-name { margin-left: 7px; color: #9a9a9a; padding-bottom: 2px; }
.ex-name-right { margin-left: 118px; }
.ctrls { margin-left: auto; margin-right: 2px; display: flex; color: #8a8a8a; }
.ctrl { width: 58px; height: 30px; display: flex; align-items: center; justify-content: center; }
.c-min { width: 12px; height: 1px; background: currentColor; }
.c-max { width: 12px; height: 12px; border: 1px solid currentColor; }
.c-x { width: 14px; height: 14px; }

.ex-tabs { height: 31px; flex: none; display: flex; border-bottom: 1px solid #dadbdc; }
.tab { display: flex; align-items: center; justify-content: center; height: 31px; color: #444; padding-bottom: 2px; }
.tab-file { width: 70px; height: 28px; background: #0a5cb4; color: #fff; padding-bottom: 0; }
.tab-home { width: 64px; background: #fff; border: 1px solid #dadbdc; border-bottom: 0; }
.tab-share { width: 66px; }
.tab-view { width: 64px; }

.ribbon { height: 124px; flex: none; display: flex; background: #f5f6f7; border-bottom: 1px solid #dadbdc; }
.group { display: flex; flex-direction: column; border-right: 1px solid #e6e7e8; color: #555; }
.g1 { width: 299px; padding-left: 7px; }
.g2 { width: 220px; padding-left: 6px; }
.g3 { width: 163px; }
.g4 { width: 152px; padding-left: 4px; }
.g5 { width: 102px; padding-left: 4px; }
.g-body { flex: 1; display: flex; padding-top: 5px; }
.g-label { height: 26px; line-height: 26px; text-align: center; color: #666; }
.g1 .g-label { margin-left: -7px; }
.g2 .g-label { margin-left: -6px; }
.g4 .g-label { margin-left: -4px; }
.g5 .g-label { margin-left: -4px; }
.big { width: 50px; position: relative; display: flex; flex-direction: column; align-items: center; text-align: center; color: #444; white-space: nowrap; }
.big > svg { margin-bottom: auto; }
.big > span { position: absolute; top: 46px; left: 50%; transform: translateX(-50%); line-height: 20px; }
.b-pin { width: 64px; }
.b-new { width: 58px; }
.dim, .dim .small { color: #8c8c8c; }
.ex-right .small, .ex-right .big { color: #444; }
.ex-right .dim, .ex-right .dim .small { color: #8c8c8c; }
.caret { position: absolute; top: 67px; left: 50%; margin-left: -4px; width: 0; height: 0; border: 4px solid transparent; border-top-color: #333; border-bottom: 0; }
.caret.soft { border-top-color: #bbb; }
.caret.inline { position: static; margin: 0 0 0 6px; border-width: 3px; border-bottom: 0; }
.ic-pin { width: 26px; height: 25px; margin-top: 10px; }
.ic-copy { width: 30px; height: 35px; margin-top: 5px; }
.ic-clip { width: 26px; height: 36px; margin-top: 4px; }
.ic-move { width: 33px; height: 36px; margin-top: 5px; }
.ic-x { width: 30px; height: 30px; margin-top: 8px; }
.ic-rename { width: 37px; height: 34px; margin-top: 5px; }
.ic-bigfolder { width: 24px; height: 35px; margin-top: 6px; }
.ic-prop { width: 26px; height: 36px; margin-top: 4px; }
.red { color: #e0201a; }
.slate { color: #74859f; }
.fade { opacity: .55; }
.mute { filter: saturate(.15) opacity(.55); }
.small-col { margin-left: 5px; display: flex; flex-direction: column; }
.sc3 { margin-left: 1px; }
.small { height: 26px; display: flex; align-items: center; color: #555; white-space: nowrap; }
.tall .small { height: 29px; position: relative; top: 1px; }
.sm-ic { width: 18px; margin-right: 4px; display: flex; justify-content: center; }
.ic-sciss { width: 14px; height: 22px; }
.ic-path { width: 18px; height: 12px; }
.ic-short { width: 14px; height: 20px; }
.ic-16 { width: 17px; height: 18px; }
.divider { width: 1px; height: 64px; margin: 5px 3px 0 3px; background: #e6e7e8; }

.addr-row { height: 52px; flex: none; display: flex; align-items: flex-start; padding: 6px 14px 0 15px; }
.nav-a { width: 16px; height: 16px; margin-top: 12px; color: #c4c8cc; }
.na1 { margin-right: 23px; }
.na2 { margin-right: 14px; }
.na3 { margin-right: 9px; }
.na4 { color: #555; height: 18px; margin-top: 11px; }
.addr { flex: 1; margin-left: 9px; height: 39px; border: 1px solid #d9d9d9; display: flex; align-items: center; padding-left: 6px; }
.ic-folder { width: 12px; height: 16px; }
.ic-chev { width: 10px; height: 12px; margin-left: 11px; }
.addr-t { margin-left: 9px; color: #222; padding-bottom: 2px; }

.ex-main { flex: 1; min-height: 0; display: flex; }
.nav { width: 198px; flex: none; padding-top: 20px; border-right: 1px solid #eee; color: #333; font-size: 15.400px; }
.nav-row { height: 30px; padding-top: 2px; display: flex; align-items: center; margin-right: 2px; white-space: nowrap; }
.nav-row.top { padding-left: 32px; }
.nav-row.sub { padding-left: 42px; }
.nav-row.sel { background: #d9d9d9; }
.nav-row.gap { margin-top: 10px; }
.ic-nav { width: 16px; height: 16px; margin-right: 7px; }
.ic-nf { width: 12px; margin-left: 2px; margin-right: 9px; }
.ic-pinS { width: 14px; height: 14px; margin-left: auto; margin-right: 3px; }

.files { flex: 1; padding-left: 20px; min-width: 0; }
.f-head { position: relative; height: 40px; display: flex; color: #666; }
.f-name { margin-left: 3px; line-height: 32px; }
.f-caret { position: absolute; left: 174px; top: 2px; width: 12px; height: 6px; }
.f-sep { position: absolute; left: 364px; top: 1px; width: 1px; height: 30px; background: #e5e5e5; }
.f-date { position: absolute; left: 372px; top: 0; line-height: 32px; }
.f-row { height: 27px; display: flex; align-items: center; padding-left: 5px; color: #222; white-space: nowrap; }
.f-row.sel { background: #d9d9d9; }
.ic-file { width: 18px; height: 20px; margin-right: 7px; }
.dea-file { width: 20px; height: 22px; margin-left: -1px; margin-right: 6px; }
.f-n { width: 342px; font-size: 15.500px; }
.f-d { color: #777; }

.ex-status { height: 29px; flex: none; display: flex; align-items: center; padding-left: 17px; padding-bottom: 3px; color: #444; }
.st-sel { margin-left: 25px; }
.st-size { margin-left: 10px; }
.st-views { margin-left: auto; margin-right: 4px; display: flex; align-items: center; height: 29px; }
.st-v { width: 28px; height: 29px; display: flex; align-items: center; justify-content: center; margin-left: 2px; }
.st-v.on { background: #cce8ff; border: 1px solid #7bbde0; }

/* app window */
.app { position: absolute; left: 341px; top: 206px; width: 876px; height: 562px; z-index: 3; display: flex; flex-direction: column; background: #fff; border: 1px solid #6a6a6a; border-bottom: 0; box-shadow: 0 4px 14px rgba(0, 0, 0, .35); }
.app-title { height: 36px; flex: none; display: flex; align-items: center; padding-left: 9px; }
.app-logo { width: 20px; height: 20px; }
.app-name { margin-left: 5px; color: #222; white-space: nowrap; font-size: 15.500px; padding-bottom: 2px; }
.ctrls.dark { color: #111; margin-right: 2px; }
.ctrls.dark .c-max { width: 12px; height: 12px; }
.frame { flex: 1; min-height: 0; display: flex; padding: 3px; background: linear-gradient(128deg, #00c83c 0%, #12d0a0 10%, #22d8e8 20%, #0a20d0 36%, #d030d8 52%, #e02828 63%, #e03a20 78%, #f09020 88%, #f8e030 100%); }
.inner { flex: 1; min-width: 0; display: flex; flex-direction: column; background: #f0f0f0; }
.a-tabs { flex: none; height: 32px; padding: 2px 0 0 9px; display: flex; }
.a-tab { height: 30px; display: flex; align-items: center; justify-content: center; background: #e9e9e9; border: 1px solid #d0d0d0; border-bottom: 0; border-left: 0; color: #333; white-space: nowrap; }
.a-tab.on { background: #fafafa; border-left: 1px solid #d0d0d0; position: relative; z-index: 1; height: 32px; padding-bottom: 5px; }
.w60 { width: 60px; }
.w90 { width: 90px; }
.w79 { width: 79px; }

.pane-wrap { flex: none; height: 416px; display: flex; padding-left: 9px; }
.pane { width: 849px; background: #fafafa; border-top: 2px solid #b4b4b4; border-bottom: 1px solid #b8b8b8; padding: 27px 0 0 15px; }
.vbar { width: 4px; margin-left: 1px; background: #fafafa; border: 1px solid #c4c4c4; border-radius: 2px; }
.file-row { display: flex; align-items: flex-start; }
.file-label { width: 67px; line-height: 37px; color: #333; }
.file-input { width: 650px; height: 37px; border: 1px solid #c8c8c8; border-radius: 2px; background: #fff; padding-left: 3px; font-size: 24.200px; line-height: 36px; color: #222; white-space: nowrap; }
.btn { font: 15px/20px "Noto Sans", "Noto Sans CJK SC", sans-serif; color: #333; border: 1px solid #bdbdbd; border-radius: 2px; background: linear-gradient(#fdfdfd, #ececec); padding: 0; }
.btn-import { width: 100px; height: 32px; margin-left: 9px; }
.table-row { display: flex; align-items: flex-start; margin-top: 13px; margin-left: 12px; }
.grid { width: 676px; height: 311px; background: #fff; border-right: 1px solid #c0c0c0; border-bottom: 1px solid #c0c0c0; border-left: 1px solid #c0c0c0; display: flex; flex-direction: column; }
.g-head { height: 25px; flex: none; display: flex; background: linear-gradient(#f8f8f8, #eeeeee); border-bottom: 1px solid #bbb; text-align: center; line-height: 24px; }
.gh-corner { width: 14px; }
.gh-var { width: 500px; border-right: 1px solid #ccc; }
.gh-type { width: 126px; font-weight: 700; }
.gh-fill { flex: 1; background: #ececec; }
.g-line { height: 37.500px; flex: none; display: flex; }
.rh { width: 15px; flex: none; background: #f0f0f0; border-right: 1px solid #c8c8c8; border-bottom: 1px solid #c8c8c8; text-align: center; font-size: 16px; line-height: 38px; color: #333; }
.rh.bold { font-weight: 700; }
.cell { width: 500px; flex: none; padding-left: 4px; line-height: 33px; border-bottom: 1px solid #c8c8c8; color: #222; }
.cell.yellow { background: #fff275; }
.cell.green { background: #00d800; border-bottom-color: #8fe88f; }
.combo { width: 124px; flex: none; height: 36px; padding-left: 6px; position: relative; display: flex; align-items: center; border: 1px solid #c6c6c6; border-radius: 2px; background: linear-gradient(#fdfdfd, #e9e9e9); color: #333; }
.combo-a { position: absolute; right: 11px; top: 15px; width: 0; height: 0; border: 4.500px solid transparent; border-top: 5px solid #666; border-bottom: 0; }
.g-rest { flex: 1; display: flex; }
.rh-rest { width: 15px; background: #f0f0f0; }
.btn-confirm { width: 94px; height: 30px; margin: 173px 0 0 24px; }

.a-foot { flex: 1; display: flex; align-items: center; padding-left: 8px; }
.foot-t { white-space: pre; color: #333; position: relative; top: 1px; }
.btn-run { margin-left: auto; margin-right: 16px; width: 93px; height: 64px; font-size: 24px; background: #f3f3f3; border-color: #c8c8c8; }

.spot { position: absolute; left: 888px; top: 458px; width: 116px; height: 116px; border-radius: 50%; background: #fee900; mix-blend-mode: darken; z-index: 4; }
.cursor { position: absolute; left: 946px; top: 516px; width: 13px; height: 20px; z-index: 5; }

.headline { position: absolute; left: 375px; top: 48px; margin: 0; z-index: 6; font-size: 54px; line-height: 64px; font-weight: 700; color: #ff00a8; letter-spacing: .7px; -webkit-text-stroke: 1.800px #ff00a8; white-space: nowrap; }

/* taskbar */
.taskbar { position: relative; z-index: 7; height: 46px; flex: none; display: flex; align-items: center; color: #f2f2f2; background: linear-gradient(90deg, #22363f 0%, #1f3340 50%, #17263f 75%, #15233f 100%); }
.tb-btn { width: 60px; height: 46px; display: flex; align-items: center; justify-content: center; }
.ic-tsearch { width: 20px; height: 22px; }
.ti { height: 46px; display: flex; align-items: center; white-space: nowrap; }
.ti span { position: relative; top: 1px; }
.t1 { width: 202px; padding-left: 21px; gap: 16px; }
.t2 { width: 194px; padding-left: 21px; gap: 14px; }
.t3 { width: 200px; padding-left: 21px; gap: 5px; }
.t4 { width: 200px; padding-left: 23px; gap: 6px; }
.t5 { width: 212px; padding-left: 24px; gap: 3px; }
.t6 { width: 200px; padding-left: 12px; gap: 5px; background: #4d5c6b; }
.ic-tf { width: 14px; height: 26px; }
.ic-app { width: 30px; height: 28px; }
.ic-app.x28 { width: 28px; }
.tray { margin-left: auto; margin-right: 18px; display: flex; align-items: center; }
.tr { height: 46px; display: flex; align-items: center; justify-content: center; }
.w30 { width: 30px; }
.w31 { width: 31px; }
.w40 { width: 40px; }
.w44 { width: 44px; }
.tr-a { font-size: 20px; font-weight: 300; }
.ic-tr { width: 18px; height: 20px; }
.ic-note { width: 20px; height: 22px; }
.sogou { width: 18px; height: 24px; border-radius: 4px; background: #e8642a; color: #fff; font-weight: 700; font-size: 17px; line-height: 24px; text-align: center; }
.clock { width: 100px; display: flex; flex-direction: column; align-items: center; line-height: 23px; }
```
